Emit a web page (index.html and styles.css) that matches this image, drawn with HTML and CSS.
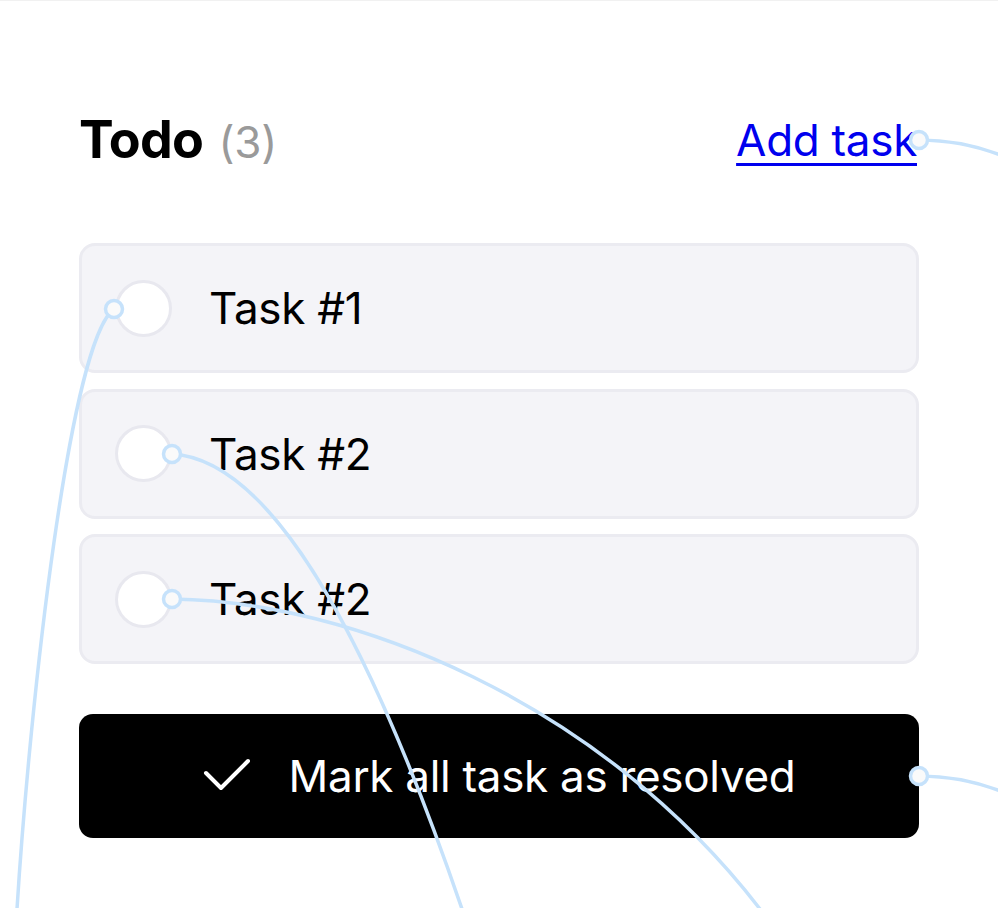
FILE: index.html
```html
<!DOCTYPE html>
<html lang="en">
<head>
<meta charset="utf-8">
<title>Todo</title>
<link rel="stylesheet" href="styles.css">
</head>
<body>
<main class="page">
  <header class="head">
    <h1 class="title">Todo <span class="count">(3)</span></h1>
    <a class="add" href="#">Add task</a>
  </header>
  <ul class="tasks">
    <li class="task"><span class="radio"></span><span class="label">Task #1</span></li>
    <li class="task"><span class="radio"></span><span class="label">Task #2</span></li>
    <li class="task"><span class="radio"></span><span class="label">Task #2</span></li>
  </ul>
  <button class="resolve" type="button">
    <svg class="tick" width="48" height="36" viewBox="0 0 48 36" aria-hidden="true"><path d="M3 15 L18 30 L45 3" fill="none" stroke="#fff" stroke-width="4" stroke-linecap="round" stroke-linejoin="round"/></svg>
    <span>Mark all task as resolved</span>
  </button>
</main>
<svg class="wires" width="998" height="908" viewBox="0 0 998 908" aria-hidden="true">
  <g fill="none" stroke="#c6e2fb" stroke-width="3.5">
    <path d="M919 139 C 950 139, 978 144, 1010 158"/>
    <path d="M114 308 C 70 340, 30 700, 17 908"/>
    <path d="M172 453 C 264 458, 360 610, 462 908"/>
    <path d="M172 598 C 350 600, 600 700, 760 908"/>
    <path d="M919 775 C 950 775, 978 780, 1010 794"/>
  </g>
  <g fill="#fafafa" stroke="#c6e2fb" stroke-width="3.5">
    <circle cx="919" cy="139" r="8.5"/>
    <circle cx="114" cy="308" r="8.5"/>
    <circle cx="172" cy="453" r="8.5"/>
    <circle cx="172" cy="598" r="8.5"/>
    <circle cx="919" cy="775" r="8.5"/>
  </g>
</svg>
</body>
</html>
```
FILE: styles.css
```css
html, body {
  margin: 0;
  padding: 0;
}

body {
  position: relative;
  width: 998px;
  height: 908px;
  overflow: hidden;
  background: #fff;
  border-top: 1px solid #f1f1f1;
  box-sizing: border-box;
  font-family: Inter, "Noto Sans", sans-serif;
  color: #000;
}

.page {
  padding: 0 79px;
}

.head {
  display: flex;
  justify-content: space-between;
  align-items: center;
  margin-top: 109px;
  height: 62px;
}

.title {
  margin: 0;
  font-size: 52px;
  line-height: 62px;
  font-weight: 700;
  letter-spacing: -0.8px;
}

.count {
  font-weight: 400;
  font-size: 44px;
  color: #9a9a9a;
  margin-left: 4px;
  letter-spacing: -0.3px;
}

.add {
  font-size: 44px;
  line-height: 44px;
  letter-spacing: -0.3px;
  color: #0000ee;
  text-decoration: underline;
  text-decoration-thickness: 3px;
  text-underline-offset: 7px;
  margin-right: 2px;
  margin-bottom: 2px;
}

.tasks {
  list-style: none;
  margin: 71px 0 0;
  padding: 0;
  display: flex;
  flex-direction: column;
  gap: 15.5px;
}

.task {
  box-sizing: border-box;
  height: 130px;
  display: flex;
  align-items: center;
  gap: 37px;
  padding-left: 33px;
  background: #f4f4f8;
  border: 3px solid #ebebf1;
  border-radius: 16px;
}

.radio {
  box-sizing: border-box;
  width: 57px;
  height: 57px;
  border-radius: 50%;
  background: #fff;
  border: 3px solid #e8e8ef;
  flex: none;
}

.label {
  font-size: 44px;
  line-height: 1;
  letter-spacing: -0.3px;
}

.resolve {
  margin-top: 50px;
  width: 100%;
  height: 124px;
  display: flex;
  align-items: center;
  justify-content: center;
  gap: 38px;
  background: #000;
  color: #fff;
  border: none;
  border-radius: 14px;
  font-family: inherit;
  font-size: 44px;
  letter-spacing: -0.3px;
  padding: 0;
}

.tick {
  flex: none;
}

.wires {
  position: absolute;
  top: 0;
  left: 0;
  pointer-events: none;
}
```
